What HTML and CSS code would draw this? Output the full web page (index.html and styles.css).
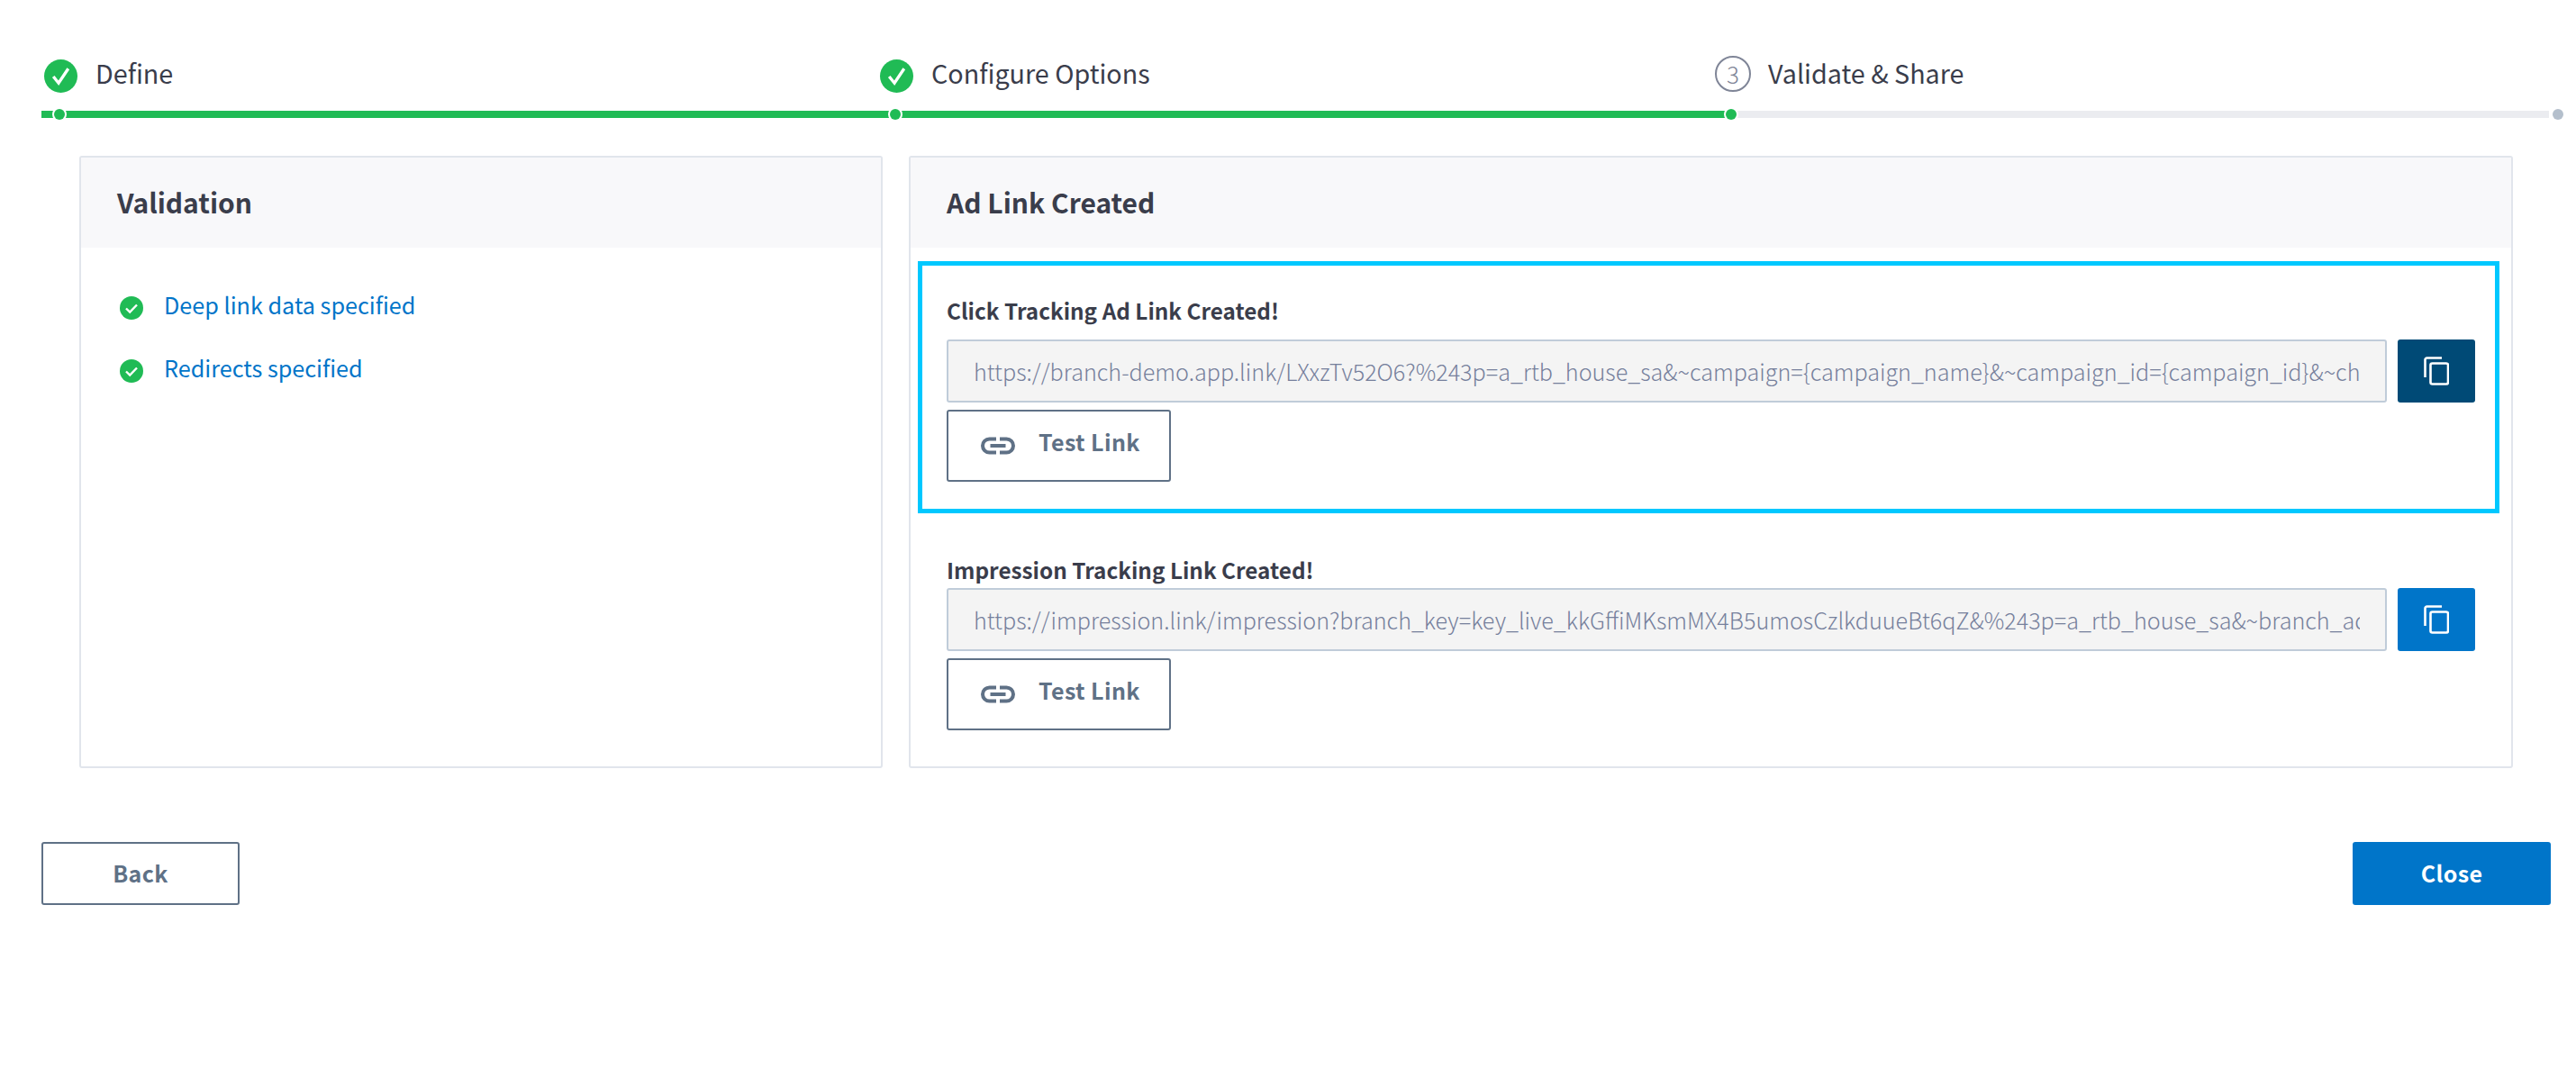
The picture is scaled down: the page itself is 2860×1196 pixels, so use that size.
FILE: index.html
```html
<!DOCTYPE html>
<html lang="en">
<head>
<meta charset="utf-8">
<title>Ad Link Created</title>
<link rel="stylesheet" href="styles.css">
</head>
<body>
<svg class="defs" width="0" height="0" aria-hidden="true">
  <symbol id="i-check" viewBox="0 0 38 38"><path d="M10.5 19.5l6 7.5L27.5 10.5" fill="none" stroke="#fff" stroke-width="3.4"/></symbol>
  <symbol id="i-link" viewBox="0 0 40 20"><path d="M18 2.5H10.500a7.500 7.500 0 0 0 0 15H18M22 2.500h7.500a7.500 7.500 0 0 1 0 15H22M11.500 10h17" fill="none" stroke="currentColor" stroke-width="4"/></symbol>
  <symbol id="i-copy" viewBox="0 0 28 32"><path d="M20 1.500H3.500a2 2 0 0 0-2 2V23" fill="none" stroke="#fff" stroke-width="2.600"/><rect x="7.500" y="7.500" width="19.500" height="23" rx="2" fill="none" stroke="#fff" stroke-width="2.600"/></symbol>
</svg>
<main class="page">
  <ol class="steps">
    <li class="step done"><svg class="step-icon"><use href="#i-check"/></svg><span class="step-label">Define</span></li>
    <li class="step done"><svg class="step-icon"><use href="#i-check"/></svg><span class="step-label">Configure Options</span></li>
    <li class="step current"><span class="step-num">3</span><span class="step-label">Validate &amp; Share</span></li>
    <li class="step-end"></li>
  </ol>
  <div class="panels">
    <section class="panel panel-left">
      <h2 class="panel-title">Validation</h2>
      <ul class="checks">
        <li class="check-row"><svg class="check-icon" viewBox="0 0 26 26"><circle cx="13" cy="13" r="13" fill="#20bb55"/><path d="M7 13.500l4.200 4L19 9.500" fill="none" stroke="#fff" stroke-width="2.400"/></svg><span class="check-text">Deep link data specified</span></li>
        <li class="check-row"><svg class="check-icon" viewBox="0 0 26 26"><circle cx="13" cy="13" r="13" fill="#20bb55"/><path d="M7 13.500l4.200 4L19 9.500" fill="none" stroke="#fff" stroke-width="2.400"/></svg><span class="check-text">Redirects specified</span></li>
      </ul>
    </section>
    <section class="panel panel-right">
      <h2 class="panel-title">Ad Link Created</h2>
      <div class="link-block highlighted">
        <div class="link-label">Click Tracking Ad Link Created!</div>
        <div class="link-row">
          <div class="url-field"><span class="url-text">https://branch-demo.app.link/LXxzTv52O6?%243p=a_rtb_house_sa&amp;~campaign={campaign_name}&amp;~campaign_id={campaign_id}&amp;~channel={channel}</span></div>
          <button class="copy-btn pressed"><svg class="copy-icon"><use href="#i-copy"/></svg></button>
        </div>
        <button class="btn test-btn"><svg class="link-icon"><use href="#i-link"/></svg><span class="test-text">Test Link</span></button>
      </div>
      <div class="link-block plain">
        <div class="link-label">Impression Tracking Link Created!</div>
        <div class="link-row">
          <div class="url-field"><span class="url-text">https://impression.link/impression?branch_key=key_live_kkGffiMKsmMX4B5umosCzlkduueBt6qZ&amp;%243p=a_rtb_house_sa&amp;~branch_ad_format=Impression</span></div>
          <button class="copy-btn"><svg class="copy-icon"><use href="#i-copy"/></svg></button>
        </div>
        <button class="btn test-btn"><svg class="link-icon"><use href="#i-link"/></svg><span class="test-text">Test Link</span></button>
      </div>
    </section>
  </div>
  <div class="actions">
    <button class="btn action-btn">Back</button>
    <button class="btn action-btn primary">Close</button>
  </div>
</main>
</body>
</html>
```
FILE: styles.css
```css
* { box-sizing: border-box; }
html, body { margin: 0; padding: 0; background: #fff; }
body { font-family: "Noto Sans CJK SC", "Noto Sans", sans-serif; color: #3a3d4b; }
.defs { position: absolute; }
.page { padding: 0 28px 0 46px; }

.steps { display: flex; list-style: none; margin: 0; padding: 0; height: 131px; }
.step { width: 928px; height: 131px; display: flex; align-items: flex-start; padding: 66px 0 0 3px; border-bottom: 8px solid #20bb55; position: relative; }
.step::after { content: ""; position: absolute; left: 14px; bottom: -10px; width: 12px; height: 12px; border-radius: 50%; background: #20bb55; box-shadow: 0 0 0 2px #fff; }
.step.current { border-bottom: 8px solid; border-image: linear-gradient(90deg, #20bb55 20px, #ebecf0 20px) 1; }
.step-end { width: 0; position: relative; }
.step-end::after { content: ""; position: absolute; left: 4px; top: 121px; width: 12px; height: 12px; border-radius: 50%; background: #b4bfcc; box-shadow: 0 0 0 2px #fff; }
.step-icon { width: 37px; height: 37px; border-radius: 50%; background: #20bb55; flex: none; }
.step-num { width: 40px; height: 40px; margin: -4px 0 0 -1px; border-radius: 50%; border: 2px solid #7f8597; color: #7f8597; font-size: 26px; font-weight: 300; line-height: 35px; text-align: center; flex: none; }
.step-label { margin: -4px 0 0 20px; font-size: 28.7px; line-height: 38px; }
.step.current .step-label { margin-left: 19px; }

.panels { display: flex; gap: 29px; margin: 42px 42px 0 42px; height: 680px; }
.panel { border: 2px solid #e1e5ec; border-radius: 3px; height: 100%; }
.panel-left { width: 892px; flex: none; }
.panel-right { flex: 1; min-width: 0; }
.panel-title { margin: 0; height: 100px; padding: 29px 0 0 40px; background: #f8f8fa; font-size: 30px; line-height: 40px; font-weight: 700; color: #3a3d4b; }

.checks { list-style: none; margin: 0; padding: 44px 0 0 43px; }
.check-row { display: flex; align-items: flex-start; height: 70px; font-size: 25.2px; line-height: 36px; color: #0075c9; }
.check-icon { width: 26px; height: 26px; margin: 10px 23px 0 0; flex: none; }
.check-text { margin-top: 1px; }

.highlighted { margin: 15px 13px 0 8px; height: 280px; border: 5px solid #00c8ff; padding: 32px 22px 0 27px; }
.plain { padding: 45px 40px 0 40px; }
.link-label { font-size: 24.3px; line-height: 36px; font-weight: 700; color: #3a3d4b; margin-bottom: 2px; }
.highlighted .link-label { margin-bottom: 14px; }
.link-row { display: flex; gap: 12px; }
.url-field { flex: 1; min-width: 0; height: 70px; padding: 0 28px; background: #f4f4f4; border: 2px solid #c0ccd9; border-radius: 3px; display: flex; align-items: center; }
.url-text { display: block; width: 100%; overflow: hidden; white-space: nowrap; font-size: 25.15px; line-height: 40px; font-weight: 300; color: #76809c; }
.copy-btn { width: 86px; height: 70px; border: 0; border-radius: 3px; background: #0075c9; padding: 0; display: flex; align-items: center; justify-content: center; }
.copy-btn.pressed { background: #004a76; }
.copy-icon { width: 28px; height: 32px; }

.btn { font-family: inherit; border: 2px solid #5f7186; border-radius: 3px; background: #fff; color: #5f7186; font-weight: 700; font-size: 25px; letter-spacing: .4px; }
.test-btn { display: flex; align-items: flex-start; width: 249px; height: 80px; margin-top: 8px; padding: 0 0 0 35px; }
.link-icon { width: 40px; height: 20px; margin-top: 28px; flex: none; }
.test-text { margin: 15px 0 0 25px; line-height: 36px; }

.actions { display: flex; justify-content: space-between; margin-top: 82px; }
.action-btn { width: 220px; height: 70px; padding: 0 0 3px; }
.action-btn.primary { border: 0; background: #0075c9; color: #fff; }
```
